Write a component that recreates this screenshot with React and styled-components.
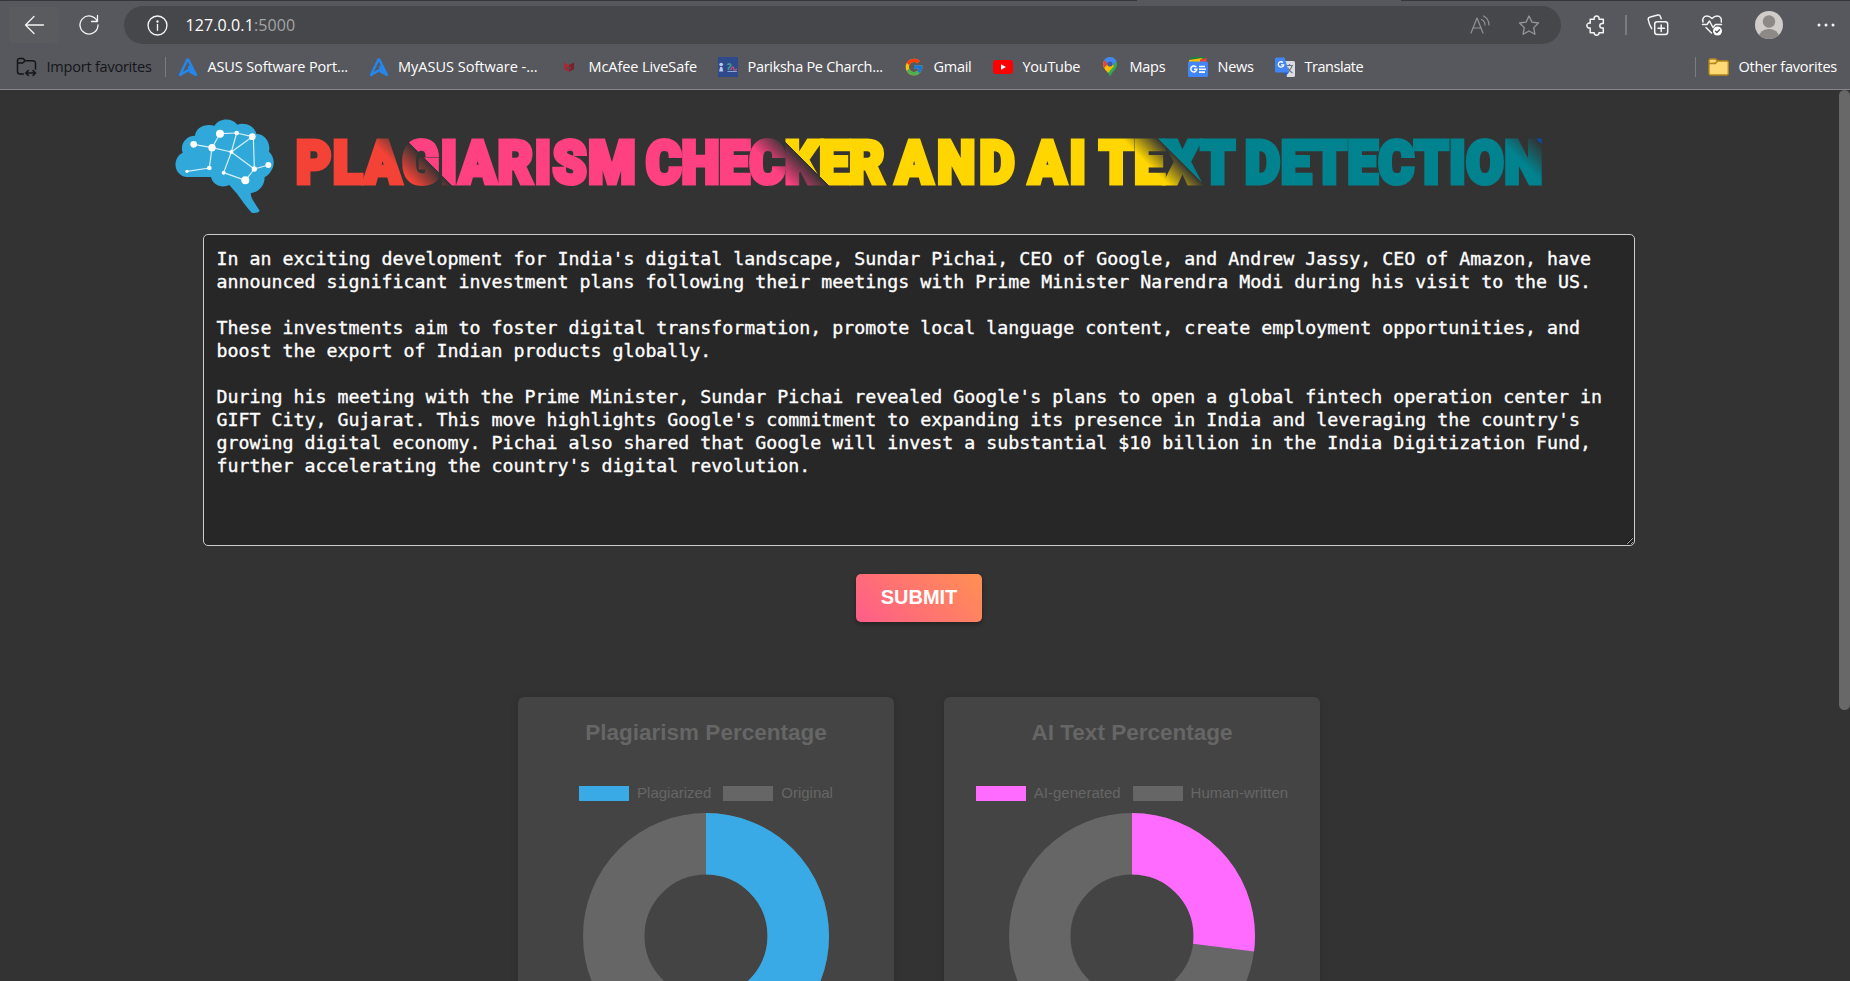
import React from "react";
import styled, { createGlobalStyle } from "styled-components";
import { FcGoogle } from "react-icons/fc";

const GlobalStyle = createGlobalStyle`
  * { box-sizing: border-box; }
  html, body { margin: 0; padding: 0; height: 100%; overflow: hidden; background: #333; }
`;

const Window = styled.div`
  display: flex;
  flex-direction: column;
  height: 981px;
  overflow: hidden;
  background: #333;
  font-family: "Liberation Sans", Arial, sans-serif;
`;

/* ---------- browser chrome ---------- */

const Chrome = styled.header`
  flex: none;
  height: 90px;
  background: #57585d;
  border-bottom: 1px solid #858688;
  font-family: "Open Sans", "Segoe UI", sans-serif;
  color: #fff;
`;

const TabEdge = styled.div`
  height: 1px;
  background: linear-gradient(90deg, #35353c 0 1137px, #57585d 1137px 1401px, #35353c 1401px);
`;

const Toolbar = styled.div`
  display: flex;
  align-items: center;
  height: 48px;
  padding-left: 9px;
`;

const ToolButton = styled.div`
  display: flex;
  align-items: center;
  justify-content: center;
  flex: none;
  width: ${(p) => p.$w}px;
  height: 36px;
  border-radius: 4px;
  background: ${(p) => (p.$raised ? "#5a5b5f" : "transparent")};
  svg { display: block; }
`;

const AddressBar = styled.div`
  display: flex;
  align-items: center;
  flex: none;
  width: 1437px;
  height: 38px;
  margin: 0 5px;
  padding: 0 21px 0 23px;
  border-radius: 19px;
  background: #46474b;
`;

const Url = styled.div`
  flex: 1;
  margin-left: 17.5px;
  font-size: 16px;
  line-height: 20px;
  letter-spacing: 0.1px;
  span { color: #a3a4a6; }
`;

const AddressActions = styled.div`
  display: flex;
  align-items: center;
  gap: 28px;
`;

const Separator = styled.div`
  flex: none;
  width: ${(p) => p.$w || 1}px;
  height: 20px;
  background: #7b7c80;
`;

const FavoritesBar = styled.nav`
  display: flex;
  align-items: center;
  height: 36px;
  padding: 0 13px 0 16px;
  font-size: 14.5px;
`;

const Favorite = styled.div`
  display: flex;
  align-items: center;
  flex: none;
  width: ${(p) => (p.$w ? p.$w + "px" : "auto")};
  gap: ${(p) => p.$gap || 9.5}px;
  color: ${(p) => (p.$dark ? "#141518" : "#fff")};
  white-space: nowrap;
  letter-spacing: ${(p) => p.$track || 0}px;
  svg { display: block; flex: none; }
`;

const Label = styled.span`
  line-height: 20px;
  padding-bottom: 1px;
`;

const Spacer = styled.div`
  flex: ${(p) => (p.$w ? `none` : 1)};
  width: ${(p) => p.$w || 0}px;
`;

/* ---------- page ---------- */

const Page = styled.main`
  position: relative;
  flex: 1;
  min-height: 0;
  overflow: hidden;
`;

const ScrollThumb = styled.div`
  position: absolute;
  top: 0;
  right: 0;
  width: 11px;
  height: 620px;
  border-radius: 6px;
  background: #686868;
`;

const Banner = styled.div`
  display: flex;
  align-items: flex-start;
  height: 144px;
  padding: 27px 0 0 173px;
  svg { display: block; flex: none; }
`;

const Title = styled.h1`
  flex: none;
  width: 1400px;
  height: 80px;
  margin: 6px 0 0 20px;
  font-family: Roboto, "Liberation Sans", sans-serif;
  font-size: 60px;
  font-weight: 900;
  line-height: 80px;
  white-space: nowrap;
  color: transparent;
  -webkit-text-stroke: 5px transparent;
  transform: scaleX(0.9);
  transform-origin: left center;
  background: linear-gradient(
    42deg,
    #f44336 0 102px, #333 129px,
    #ff4081 129px 381px, #333 409px,
    #ffd600 409px 662px, #333 689px,
    #00838f 689px 942px, #333 970px,
    #0d47a1 970px
  );
  background-clip: text;
  -webkit-background-clip: text;
`;

const Word = styled.span`
  display: inline-block;
  width: ${(p) => p.$w}px;
  letter-spacing: ${(p) => p.$track}px;
`;

const Form = styled.form`
  display: flex;
  flex-direction: column;
  align-items: center;
  padding-right: 12px;
`;

const TextBox = styled.textarea`
  display: block;
  width: 1432px;
  height: 312px;
  padding: 12px 12px 12px 12.5px;
  border: 1px solid #ccc;
  border-radius: 5px;
  outline: none;
  background: #272727;
  color: #fff;
  font-family: "DejaVu Sans Mono", monospace;
  font-size: 18.27px;
  line-height: 23px;
  -webkit-text-stroke: 0.35px #fff;
  overflow: hidden;
`;

const Submit = styled.button`
  width: 126px;
  height: 48px;
  margin-top: 28px;
  padding: 0 0 1px;
  border: 0;
  border-radius: 5px;
  background: linear-gradient(45deg, #ff5c8a, #ff9052);
  box-shadow: 0 2px 5px rgba(0, 0, 0, 0.35);
  color: #fff;
  font: bold 20px "Liberation Sans", Arial, sans-serif;
`;

const Charts = styled.section`
  display: flex;
  justify-content: center;
  gap: 50px;
  padding: 75px 12px 0 0;
`;

const Card = styled.article`
  display: flex;
  flex-direction: column;
  align-items: center;
  width: 376px;
  height: 420px;
  padding-top: 21px;
  border-radius: 6px;
  background: #444;
  box-shadow: 0 0 8px rgba(0, 0, 0, 0.12);
  color: #666;
`;

const CardTitle = styled.h2`
  margin: 0 0 36px;
  font-size: 22.5px;
  line-height: 30px;
`;

const Legend = styled.div`
  display: flex;
  gap: 12px;
  height: 18px;
  margin-bottom: 11px;
`;

const LegendItem = styled.div`
  display: flex;
  align-items: center;
  gap: 8px;
  font-size: 15px;
  line-height: 18px;
  &::before {
    content: "";
    width: 50px;
    height: 15px;
    background: ${(p) => p.$color};
  }
`;

const Ring = styled.svg`
  display: block;
  flex: none;
  width: 246px;
  height: 246px;
`;

/* ---------- icons ---------- */

const line = { fill: "none", stroke: "#f4f4f4", strokeWidth: 1.3, strokeLinecap: "round", strokeLinejoin: "round" };

const BackIcon = () => (
  <svg width="21" height="20" viewBox="0 0 20 20" {...line}><path d="M19 10H1M9.5 1.500 1 10l8.500 8.500" /></svg>
);
const ReloadIcon = () => (
  <svg width="22" height="22" viewBox="0 0 22 22" {...line}><path d="M19.300 7.500A9 9 0 1 0 20 11M19.500 1.500v6h-6" /></svg>
);
const InfoIcon = () => (
  <svg width="21" height="21" viewBox="0 0 20 20" {...line}><circle cx="10" cy="10" r="9" /><path d="M10 9v5.500" /><circle cx="10" cy="6.200" r=".5" fill="#fff" /></svg>
);
const ReadAloudIcon = () => (
  <svg width="20" height="20" viewBox="0 0 20 20" {...line} stroke="#939497" strokeWidth="1.200">
    <path d="M1 18 7 3l6 15M3.200 13h7.600M11.500 4.500c2.200 1 3.500 3 3.500 5.500M13.500 1c3.500 1.800 5.500 4.800 5.500 9" />
  </svg>
);
const StarIcon = () => (
  <svg width="22" height="20" viewBox="0 0 22 20" {...line} stroke="#96979a"><path d="m11 1 2.900 6.100 6.600.9-4.800 4.600 1.200 6.600-5.900-3.200-5.900 3.200 1.200-6.600L1.500 8l6.600-.9z" /></svg>
);
const PuzzleIcon = () => (
  <svg width="20" height="21" viewBox="0 0 20 21" {...line} strokeWidth="1.500">
    <path d="M5 4.200h3.200a2.500 2.500 0 1 1 4.800 0h4.300v4.300h-1.200a2.300 2.300 0 0 0 0 4.600h1.200v4.700h-4.300a2.400 2.400 0 0 1-4.800 0H4.200v-4.900a2.500 2.500 0 1 1 0-4.700V4.200z" />
  </svg>
);
const CollectionsIcon = () => (
  <svg width="22" height="22" viewBox="0 0 22 22" {...line} strokeWidth="1.500">
    <rect x="7.700" y="7.700" width="13" height="12.800" rx="2.500" /><path d="M14.200 11v6.400M11 14.200h6.400M4.700 14.700C3.500 12.500 1.500 7.500 1.200 5.500 1 4 2 3.300 3.300 3l7.500-1.900c1.500-.3 2.300.4 2.600 1.400l.8 2.200" />
  </svg>
);
const HealthIcon = () => (
  <svg width="22" height="22" viewBox="0 0 22 22" {...line} strokeWidth="1.500">
    <path d="M2 8C1 4.500 3 2 6 2c2 0 3.500 1 5 2.500C12.500 3 14 2 16 2c3.200 0 5 2.500 4.300 6M1.500 10.500H6L8.500 7l3.500 6.500 2.500-3h6M5 13.500l5.500 5.500" />
    <circle cx="16.500" cy="17" r="4.500" fill="#fff" stroke="none" /><path d="m14.600 17.200 1.300 1.300 2.600-2.700" stroke="#57585d" />
  </svg>
);
const AvatarIcon = () => (
  <svg width="28" height="28" viewBox="0 0 28 28">
    <clipPath id="avatar"><circle cx="14" cy="14" r="14" /></clipPath>
    <g clipPath="url(#avatar)"><rect width="28" height="28" fill="#cfccc9" /><circle cx="14" cy="10.500" r="6.200" fill="#8c8986" /><ellipse cx="14" cy="26" rx="10" ry="8" fill="#8c8986" /></g>
  </svg>
);
const MoreIcon = () => (
  <svg width="18" height="4" viewBox="0 0 18 4" fill="#f4f4f4"><circle cx="2" cy="2" r="1.500" /><circle cx="9" cy="2" r="1.500" /><circle cx="16" cy="2" r="1.500" /></svg>
);
const ImportIcon = () => (
  <svg width="21" height="20" viewBox="0 0 21 20" {...line} stroke="#141518" strokeWidth="1.500">
    <path d="M7.500 17H4a2.500 2.500 0 0 1-2.500-2.500v-11A2 2 0 0 1 3.500 1.500h3.700l2 2.300H17A2.500 2.500 0 0 1 19.500 6.300V12M1.500 6h5.200l2.500-2.200M10 16h9.500M12.300 13.500 9.800 16l2.500 2.500M17 13.500l2.500 2.500-2.500 2.500" />
  </svg>
);
const AsusIcon = () => (
  <svg width="20" height="20" viewBox="0 0 20 20" fill="none" stroke="#2487ee" strokeWidth="2.400" strokeLinejoin="round"><path d="M9.800 1.800 2 18l9.500-5.600M9.800 1.800 18 18l-7-3.700M10.500 9l5.500 8" /></svg>
);
const McAfeeIcon = () => (
  <svg width="20" height="20" viewBox="0 0 20 20"><path d="M5 5.500 10 8V14.800L5 12.500z" fill="#a52a36" /><path d="m15 5.500-5 2.500v6.800l5-2.500z" fill="#7c2029" /><path d="M8 9.500 10 10.500l2-1.300v2.300l-2 1.300-2-1z" fill="#57484d" /></svg>
);
const ParikshaIcon = () => (
  <svg width="20" height="20" viewBox="0 0 19 20" preserveAspectRatio="none">
    <rect width="19" height="20" fill="#2f4a8c" /><circle cx="3" cy="7.500" r="1.800" fill="#b9c8e6" /><path d="M1 14.500 2 10h2l1 4.500z" fill="#b9c8e6" />
    <path d="M9 8c1-2 4-1 3 1l-2 2v2" stroke="#47998e" strokeWidth="1.500" fill="none" /><path d="M12 13c2-5 3-3 3-1s2 1 3 0" stroke="#b65578" strokeWidth="1.400" fill="none" /><path d="M9 14.500h9" stroke="#8fa5d0" />
  </svg>
);
const YouTubeIcon = () => (
  <svg width="20" height="20" viewBox="0 0 20 20"><rect y="3" width="20" height="14" rx="3" fill="#f00" /><path d="m8 7.200 5 2.800-5 2.800z" fill="#fff" /></svg>
);
const MapsIcon = () => (
  <svg width="20" height="20" viewBox="0 0 20 20">
    <clipPath id="pin"><path d="M10 20C9.500 15 3 12.500 3 7a7 7 0 0 1 14 0c0 5.500-6.500 8-7 13z" /></clipPath>
    <g clipPath="url(#pin)"><rect width="20" height="20" fill="#34a853" /><path d="M0 9 4.500 3.500 10 8 3 17z" fill="#fbbc04" /><path d="M0 0h5l4 6-5 5-4-2z" fill="#ea4335" /><path d="M4 2 8-1h11v3l-5.500 5.500L10 9 4.500 3.500z" fill="#4285f4" /><path d="m3 14 8-8 3 3-7 8z" fill="#fbbc04" /><path d="m9 20 7-12 3 6-8 8z" fill="#34a853" /></g>
    <circle cx="10" cy="7" r="2.600" fill="#3d5a99" />
  </svg>
);
const NewsIcon = () => (
  <svg width="20" height="20" viewBox="0 0 20 20">
    <path d="M3 0h14v6H3z" fill="#188038" /><path d="m1 3 13-2 1 6H1z" fill="#fbbc04" /><path d="M12 2.500 18.500 1v5H12z" fill="#ea4335" /><rect y="4.500" width="20" height="15.500" rx="1.500" fill="#4285f4" />
    <path d="M8.300 10.200A3 3 0 1 0 8.800 12.300H6" stroke="#fff" strokeWidth="1.500" fill="none" /><path d="M11 9.500h6M11 12.300h7M11 15.100h6" stroke="#fff" strokeWidth="1.600" />
  </svg>
);
const TranslateIcon = () => (
  <svg width="20" height="20" viewBox="0 0 20 20">
    <path d="M7 4h11.500A1.500 1.500 0 0 1 20 5.500v13a1.500 1.500 0 0 1-1.500 1.500H12z" fill="#dadce0" /><path d="M11 8.500h7M14.500 7v1.500M17 8.500c-.5 3-3 5.500-5 7M12.500 10.500c1 2.500 3 4.500 5 5.500" stroke="#68787f" strokeWidth="1.200" fill="none" />
    <path d="M9 15h5l-3 4z" fill="#2a56c6" /><path d="M1.500.5h8L14 15.500H1.500A1.500 1.500 0 0 1 0 14V2A1.500 1.500 0 0 1 1.500.5z" fill="#4285f4" />
    <path d="M8 5.600A2.700 2.700 0 1 0 8.700 7.800H6" stroke="#fff" strokeWidth="1.300" fill="none" />
  </svg>
);
const FolderIcon = () => (
  <svg width="21" height="20" viewBox="0 0 21 20" stroke="#b5841c" strokeWidth="1.400"><path d="M1 3.500A1.500 1.500 0 0 1 2.500 2h5L9.500 4H19a1.300 1.300 0 0 1 1.300 1.300v11.400A1.500 1.500 0 0 1 18.800 18H2.500A1.500 1.500 0 0 1 1 16.500z" fill="#ffd976" /><path d="M1 6.500h6.500L9.500 4" fill="#f0b92c" /></svg>
);

const LINKS = [[102, 132, 157, 142], [157, 142, 181, 100], [181, 100, 231, 98], [231, 98, 278, 109], [157, 142, 215, 155], [231, 98, 215, 155], [278, 109, 215, 155], [157, 142, 149, 203], [149, 203, 82, 213], [215, 155, 192, 217], [215, 155, 284, 206], [281, 109, 284, 206], [284, 206, 326, 194], [284, 206, 257, 240], [192, 217, 257, 240]];
const NODES = [[102, 132, 10], [157, 142, 11], [181, 100, 12], [231, 98, 7], [278, 109, 10], [215, 155, 6], [149, 203, 7], [82, 213, 5], [192, 217, 6], [284, 206, 8], [326, 194, 9], [257, 240, 12]];

const BrainLogo = () => (
  <svg width="103" height="98" viewBox="40 50 309 294">
    <path fill="#30a8da" d="M80 230C56 226 45 206 48 186 50 172 58 162 69 157 60 133 78 106 106 106 108 83 134 68 165 76 177 54 215 50 233 73 253 64 284 75 290 100 316 101 334 128 328 154 344 168 347 194 334 212 330 220 322 228 315 230 315 257 297 275 273 279 274 296 285 306 300 331 298 337 284 339 276 337 261 321 248 302 232 280L209 254C186 265 158 253 154 230Z" />
    <g stroke="#d9f1fb" strokeWidth="3.500">{LINKS.map(([a, b, c, d]) => <line key={`${a}${b}${c}${d}`} x1={a} y1={b} x2={c} y2={d} />)}</g>
    <g fill="#fff">{NODES.map(([x, y, r]) => <circle key={`${x}-${y}`} cx={x} cy={y} r={r} />)}</g>
  </svg>
);

/* ---------- content ---------- */

const FAVORITES = [
  { label: "ASUS Software Port...", icon: <AsusIcon />, width: 191, track: -0.13, gap: 10 },
  { label: "MyASUS Software -...", icon: <AsusIcon />, width: 190, track: 0 },
  { label: "McAfee LiveSafe", icon: <McAfeeIcon />, width: 159.5, track: -0.08, gap: 10 },
  { label: "Pariksha Pe Charch...", icon: <ParikshaIcon />, width: 186, track: -0.3 },
  { label: "Gmail", icon: <FcGoogle size={20} />, width: 89, track: -0.28 },
  { label: "YouTube", icon: <YouTubeIcon />, width: 107, track: -0.28 },
  { label: "Maps", icon: <MapsIcon />, width: 88, track: -0.25 },
  { label: "News", icon: <NewsIcon />, width: 87, track: -0.25 },
  { label: "Translate", icon: <TranslateIcon />, track: -0.45 },
];

const WORDS = [
  ["PLAGIARISM", 389, 1.9],
  ["CHECKER", 277.500, -0.1],
  ["AND", 148, 5],
  ["AI", 78, 4],
  ["TEXT", 162, 1],
  ["DETECTION", 340, 1],
];

const ARTICLE = `In an exciting development for India's digital landscape, Sundar Pichai, CEO of Google, and Andrew Jassy, CEO of Amazon, have announced significant investment plans following their meetings with Prime Minister Narendra Modi during his visit to the US.

These investments aim to foster digital transformation, promote local language content, create employment opportunities, and boost the export of Indian products globally.

During his meeting with the Prime Minister, Sundar Pichai revealed Google's plans to open a global fintech operation center in GIFT City, Gujarat. This move highlights Google's commitment to expanding its presence in India and leveraging the country's growing digital economy. Pichai also shared that Google will invest a substantial $10 billion in the India Digitization Fund, further accelerating the country's digital revolution.`;

const CHARTS = [
  { title: "Plagiarism Percentage", color: "#3aaae6", labels: ["Plagiarized", "Original"], share: 0.4 },
  { title: "AI Text Percentage", color: "#ff6bff", labels: ["AI-generated", "Human-written"], share: 0.27 },
];

function Doughnut({ share, color }) {
  const length = 2 * Math.PI * 92.25;
  return (
    <Ring viewBox="0 0 246 246" fill="none" strokeWidth="61.5">
      <circle cx="123" cy="123" r="92.25" stroke="#666" />
      <circle cx="123" cy="123" r="92.25" stroke={color} strokeDasharray={`${length * share} ${length}`} transform="rotate(-90 123 123)" />
    </Ring>
  );
}

function BrowserChrome() {
  return (
    <Chrome>
      <TabEdge />
      <Toolbar>
        <ToolButton $w={50} $raised><BackIcon /></ToolButton>
        <ToolButton $w={60}><ReloadIcon /></ToolButton>
        <AddressBar>
          <InfoIcon />
          <Url>127.0.0.1<span>:5000</span></Url>
          <AddressActions><ReadAloudIcon /><StarIcon /></AddressActions>
        </AddressBar>
        <ToolButton $w={59}><PuzzleIcon /></ToolButton>
        <Separator $w={2} />
        <ToolButton $w={61}><CollectionsIcon /></ToolButton>
        <ToolButton $w={48}><HealthIcon /></ToolButton>
        <ToolButton $w={66}><AvatarIcon /></ToolButton>
        <ToolButton $w={48}><MoreIcon /></ToolButton>
      </Toolbar>
      <FavoritesBar>
        <Favorite $dark $w={149} $track={-0.22}><ImportIcon /><Label>Import favorites</Label></Favorite>
        <Separator />
        <Spacer $w={11.5} />
        {FAVORITES.map((f) => (
          <Favorite key={f.label} $w={f.width} $track={f.track} $gap={f.gap}>{f.icon}<Label>{f.label}</Label></Favorite>
        ))}
        <Spacer />
        <Separator />
        <Spacer $w={12} />
        <Favorite $track={-0.22}><FolderIcon /><Label>Other favorites</Label></Favorite>
      </FavoritesBar>
    </Chrome>
  );
}

export default function App() {
  return (
    <Window>
      <GlobalStyle />
      <BrowserChrome />
      <Page>
        <Banner>
          <BrainLogo />
          <Title>{WORDS.map(([text, width, track]) => <Word key={text} $w={width} $track={track}>{text}</Word>)}</Title>
        </Banner>
        <Form onSubmit={(e) => e.preventDefault()}>
          <TextBox defaultValue={ARTICLE} spellCheck={false} />
          <Submit>SUBMIT</Submit>
        </Form>
        <Charts>
          {CHARTS.map((c) => (
            <Card key={c.title}>
              <CardTitle>{c.title}</CardTitle>
              <Legend>
                <LegendItem $color={c.color}>{c.labels[0]}</LegendItem>
                <LegendItem $color="#666">{c.labels[1]}</LegendItem>
              </Legend>
              <Doughnut share={c.share} color={c.color} />
            </Card>
          ))}
        </Charts>
        <ScrollThumb />
      </Page>
    </Window>
  );
}
